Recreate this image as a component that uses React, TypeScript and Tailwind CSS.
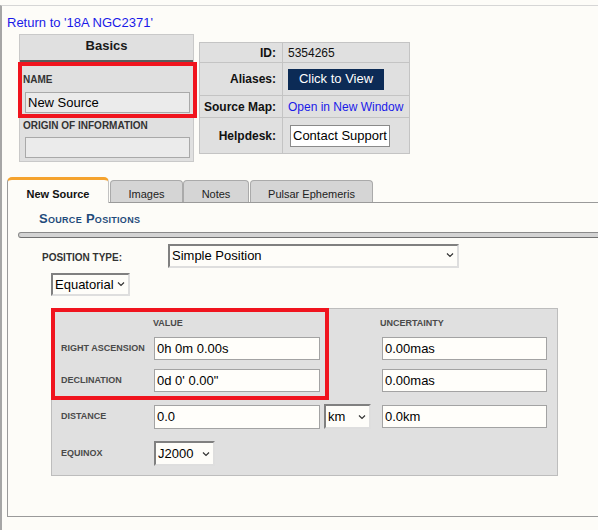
import type { ReactNode } from 'react'

// small "v" arrow drawn on the right of the native-looking selects
function Chevron() {
  return (
    <svg
      width="8"
      height="5"
      viewBox="0 0 8 5"
      className="pointer-events-none absolute right-[5px] top-1/2 -translate-y-1/2"
    >
      <path d="M1 1l3 3 3-3" fill="none" stroke="#333" strokeWidth="1.2" />
    </svg>
  )
}

function Select({ value, className }: { value: string; className: string }) {
  return (
    <div className={`relative ${className}`}>
      <select
        defaultValue={value}
        className="h-full w-full appearance-none border-2 border-t-[#808080] border-l-[#808080] border-r-[#dedede] border-b-[#dedede] bg-[#fefdf9] pl-[2px] text-[13px] text-black outline-none"
      >
        <option>{value}</option>
      </select>
      <Chevron />
    </div>
  )
}

function Field({ value, className }: { value: string; className: string }) {
  return (
    <input
      readOnly
      defaultValue={value}
      className={`border border-[#a3a3a3] bg-[#fffefa] px-[2px] text-[13px] text-black outline-none ${className}`}
    />
  )
}

function RowLabel({ children }: { children: ReactNode }) {
  return (
    <span className="w-[102px] shrink-0 pl-[9px] text-[9px] font-bold leading-[11px] text-[#4a4a4a]">
      {children}
    </span>
  )
}

function InfoLabel({ children }: { children: ReactNode }) {
  return (
    <div className="flex items-center justify-end bg-[#e0e0e0] pr-[6px] text-[12px] font-bold text-[#111]">
      {children}
    </div>
  )
}

function InfoValue({ children }: { children: ReactNode }) {
  return <div className="flex items-center bg-[#e0e0e0] pl-[5px] text-[12px] text-[#111]">{children}</div>
}

export default function App() {
  return (
    <div className="min-h-[530px] w-full overflow-hidden bg-[#fdfcf8] pt-[5px] font-['Liberation_Sans',Arial,sans-serif] text-[#222]">
      <div className="min-h-[525px] border-l-2 border-t border-l-[#a6a6a6] border-t-[#d6d6d6] pb-[14px]">
        <a href="#" className="ml-[5px] mt-[9px] block w-fit text-[13px] leading-[15px] text-[#1a1ae8]">
          Return to '18A NGC2371'
        </a>

        <div className="ml-[17px] mt-[4px] flex items-start">
          {/* Basics */}
          <div className="relative w-[175px] border border-[#c9c9c9] bg-[#e0e0e0]">
            <div className="h-[27px] border-b-2 border-[#5c5c5c] pt-[3px] text-center text-[13px] font-bold leading-[15px] text-[#1a1a1a]">
              Basics
            </div>
            <div className="pb-[3px]">
              <div className="mt-[12px] pl-[3px] text-[10px] font-bold leading-[12px] text-[#333]">NAME</div>
              <input
                readOnly
                defaultValue="New Source"
                className="ml-[5px] mt-[6px] block h-[21px] w-[165px] border border-[#a9a9a9] bg-[#ebebeb] pl-[2px] text-[13px] text-black outline-none"
              />
              <div className="mt-[7px] pl-[3px] text-[10px] font-bold leading-[12px] text-[#333]">
                ORIGIN OF INFORMATION
              </div>
              <input
                readOnly
                className="ml-[5px] mt-[5px] block h-[21px] w-[165px] border border-[#a9a9a9] bg-[#ebebeb] outline-none"
              />
            </div>
            <div className="absolute left-[-2px] top-[27px] h-[56px] w-[179px] border-4 border-[#f0141e]" />
          </div>

          {/* ID / aliases */}
          <div className="ml-[5px] mt-[8px] grid grid-cols-[82px_126px] grid-rows-[19px_32px_21px_35px] gap-px border border-[#c4c4c4] bg-[#c4c4c4]">
            <InfoLabel>ID:</InfoLabel>
            <InfoValue>5354265</InfoValue>
            <InfoLabel>Aliases:</InfoLabel>
            <InfoValue>
              <button className="h-[21px] w-[96px] bg-[#0c2b56] text-[13px] text-white">Click to View</button>
            </InfoValue>
            <InfoLabel>Source Map:</InfoLabel>
            <InfoValue>
              <a href="#" className="text-[#1a1ae8]">
                Open in New Window
              </a>
            </InfoValue>
            <InfoLabel>Helpdesk:</InfoLabel>
            <InfoValue>
              <button className="ml-[2px] h-[22px] border border-[#8a8a8a] bg-white px-[2px] text-[13px] text-black">
                Contact Support
              </button>
            </InfoValue>
          </div>
        </div>

        {/* tabs */}
        <div className="ml-[5px] mt-[15px]">
          <div className="flex items-end">
            <div className="relative z-10 -mb-px h-[26px] w-[102px] rounded-t-[5px] border-l border-r border-t-[3px] border-l-[#9a9a9a] border-r-[#c2c2c2] border-t-[#f5a32e] bg-[#fdfcf8] pt-[8px] text-center text-[11px] font-bold leading-[13px] text-[#111]">
              New Source
            </div>
            <div className="ml-[1px] h-[22px] w-[73px] rounded-t-[4px] border border-b-0 border-[#aaa] bg-[#d5d5d5] pt-[7px] text-center text-[11px] leading-[13px] text-[#222]">
              Images
            </div>
            <div className="h-[22px] w-[66px] rounded-t-[4px] border border-b-0 border-[#aaa] bg-[#d5d5d5] pt-[7px] text-center text-[11px] leading-[13px] text-[#222]">
              Notes
            </div>
            <div className="ml-[1px] h-[22px] w-[123px] rounded-t-[4px] border border-b-0 border-[#aaa] bg-[#d5d5d5] pt-[7px] text-center text-[11px] leading-[13px] text-[#222]">
              Pulsar Ephemeris
            </div>
          </div>

          <div className="w-[660px] border-b border-l border-t border-[#9a9a9a] bg-[#fdfcf8] pb-[40px]">
            <div className="ml-[31px] pt-[8px] text-[13px] font-bold leading-[15px] tracking-[0.3px] text-[#1f4b7b] [font-variant:small-caps]">
              Source Positions
            </div>
            <div className="ml-[10px] mt-[6px] h-[6px] rounded-l-full border border-[#8a8a8a] border-b-[#707070] bg-[#d3d3d3]" />

            <div className="ml-[34px] mt-[5px] flex items-start">
              <span className="w-[126px] pt-[9px] text-[10px] font-bold leading-[12px] text-[#333]">POSITION TYPE:</span>
              <Select value="Simple Position" className="h-[24px] w-[291px]" />
            </div>
            <Select value="Equatorial" className="ml-[43px] mt-[5px] h-[23px] w-[79px]" />

            {/* coordinate table */}
            <div className="relative ml-[43px] mt-[13px] w-[507px] border border-[#bdbdbd] bg-[#e0e0e0] pb-[9px]">
              <div className="flex h-[28px] items-center text-[9px] font-bold leading-[11px] text-[#4a4a4a]">
                <span className="ml-[101px] w-[227px]">VALUE</span>
                <span>UNCERTAINTY</span>
              </div>
              <div className="flex h-[23px] items-center">
                <RowLabel>RIGHT ASCENSION</RowLabel>
                <Field value="0h 0m 0.00s" className="h-[23px] w-[166px]" />
                <Field value="0.00mas" className="ml-[62px] h-[23px] w-[165px]" />
              </div>
              <div className="mt-[9px] flex h-[23px] items-center">
                <RowLabel>DECLINATION</RowLabel>
                <Field value={`0d 0' 0.00"`} className="h-[23px] w-[166px]" />
                <Field value="0.00mas" className="ml-[62px] h-[23px] w-[165px]" />
              </div>
              <div className="mt-[12px] flex h-[25px] items-center">
                <RowLabel>DISTANCE</RowLabel>
                <Field value="0.0" className="h-[24px] w-[166px]" />
                <Select value="km" className="ml-[4px] h-[25px] w-[47px]" />
                <Field value="0.0km" className="ml-[11px] h-[23px] w-[165px]" />
              </div>
              <div className="mt-[12px] flex h-[25px] items-center">
                <RowLabel>EQUINOX</RowLabel>
                <Select value="J2000" className="h-[25px] w-[61px]" />
              </div>
              <div className="absolute left-[-1px] top-[-1px] h-[92px] w-[278px] border-4 border-[#f0141e]" />
            </div>
          </div>
        </div>
      </div>
    </div>
  )
}
